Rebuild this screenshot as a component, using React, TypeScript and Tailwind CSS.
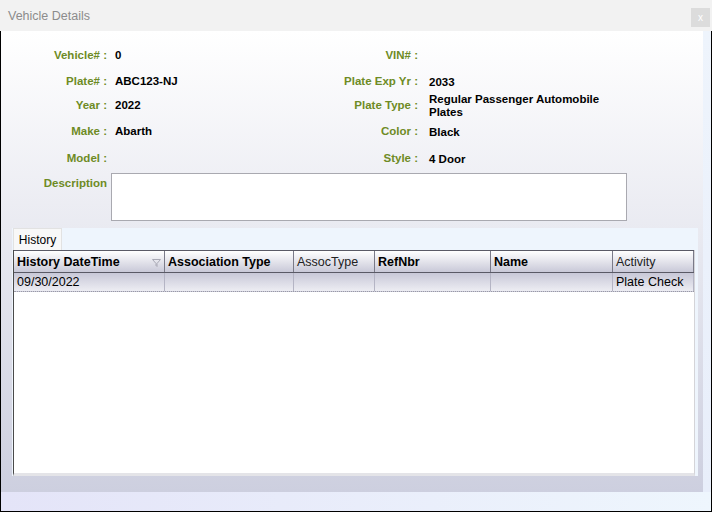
import React from "react";

type Field = { label: string; value: string };

const leftFields: Field[] = [
  { label: "Vehicle# :", value: "0" },
  { label: "Plate# :", value: "ABC123-NJ" },
  { label: "Year :", value: "2022" },
  { label: "Make :", value: "Abarth" },
  { label: "Model :", value: "" },
];

const rightFields: Field[] = [
  { label: "VIN# :", value: "" },
  { label: "Plate Exp Yr :", value: "2033" },
  { label: "Plate Type :", value: "Regular Passenger Automobile Plates" },
  { label: "Color :", value: "Black" },
  { label: "Style :", value: "4 Door" },
];

const rowHeights = ["h-[26px]", "h-[26px]", "h-[22px]", "h-[30px]", "h-[24px]"];

const columns = [
  { title: "History DateTime", w: "w-[151px]", bold: true, filter: true },
  { title: "Association Type", w: "w-[129px]", bold: true },
  { title: "AssocType", w: "w-[81px]", bold: false },
  { title: "RefNbr", w: "w-[116px]", bold: true },
  { title: "Name", w: "w-[122px]", bold: true },
  { title: "Activity", w: "flex-1", bold: false },
];

const rowData = ["09/30/2022", "", "", "", "", "Plate Check"];

const FilterIcon = () => (
  <svg width="9" height="8" viewBox="0 0 9 8" className="shrink-0">
    <path d="M0.5 0.5 H8.5 L5 4.5 V7.5 L4 6.5 V4.5 Z" fill="none" stroke="#a8a8b4" strokeWidth="1" />
  </svg>
);

export default function App() {
  return (
    <div
      className="w-[712px] h-[512px] flex flex-col bg-[#f2f2f2] overflow-hidden"
      style={{ fontFamily: '"Liberation Sans", Arial, sans-serif' }}
    >
      {/* title bar */}
      <div className="h-[31px] shrink-0 flex items-start justify-between pl-[8px] pr-[2px]">
        <span className="mt-[7px] text-[12.5px] text-[#8c8c8c]">Vehicle Details</span>
        <div className="mt-[8px] w-[19px] h-[19px] bg-[#dcdcdc] flex items-center justify-center text-[10px] text-white leading-none">
          x
        </div>
      </div>

      {/* body */}
      <div className="flex-1 flex flex-col border-l border-r border-b border-black">
        <div className="flex-1 flex">
          <div className="flex-1 bg-gradient-to-b from-white to-[#cdcfdf] flex flex-col">
            {/* fields */}
            <div className="pt-[12px] flex text-[11.5px] font-bold">
              <div className="w-[317px] flex flex-col">
                {leftFields.map((f, i) => (
                  <div key={f.label} className={`${rowHeights[i]} flex items-center`}>
                    <div className="w-[106px] text-right text-[#6e8b25]">{f.label}</div>
                    <div className="pl-[8px] text-black">{f.value}</div>
                  </div>
                ))}
              </div>
              <div className="flex flex-col">
                {rightFields.map((f, i) => (
                  <div key={f.label} className={`${rowHeights[i]} flex items-center`}>
                    <div className="w-[100px] text-right text-[#6e8b25]">{f.label}</div>
                    <div className="pl-[11px] w-[196px] text-black leading-[13px]">{f.value}</div>
                  </div>
                ))}
              </div>
            </div>

            {/* description */}
            <div className="mt-[2px] flex items-start">
              <div className="w-[106px] pt-[2px] text-right text-[11.5px] font-bold text-[#6e8b25]">
                Description
              </div>
              <div className="ml-[4px] w-[516px] h-[48px] bg-white border border-[#a9a9b0]" />
            </div>

            {/* tabs + grid */}
            <div className="mt-[7px] ml-[11px] w-[686px] h-[248px] bg-[#eef5fd] flex flex-col">
              <div className="h-[22px] flex items-end pl-[1px]">
                <div className="h-[22px] w-[49px] bg-[#f8f8f8] border-l border-t border-r border-[#e2e2e2] flex items-center justify-center text-[12px] text-black">
                  History
                </div>
              </div>
              <div className="ml-[1px] w-[682px] flex-1 bg-white border-l border-[#4a4a4a] border-r border-r-[#d4d4d8] border-b-[3px] border-b-[#e4e4e8] flex flex-col">
                {/* header */}
                <div className="h-[23px] flex border-t border-b border-[#5a5a66] bg-gradient-to-b from-white to-[#c9c9d8] text-[12.5px]">
                  {columns.map((c) => (
                    <div
                      key={c.title}
                      className={`${c.w} flex items-center justify-between px-[3px] pt-[2px] border-r border-[#7a7a88] ${
                        c.bold ? "font-bold text-black" : "text-[#222]"
                      }`}
                    >
                      <span>{c.title}</span>
                      {c.filter && <FilterIcon />}
                    </div>
                  ))}
                </div>
                {/* row */}
                <div className="h-[19px] flex border-b border-dotted border-[#9a9aa6] bg-gradient-to-b from-[#c8c8d8] to-[#ededf3] text-[12.5px] text-black">
                  {columns.map((c, i) => (
                    <div key={c.title} className={`${c.w} flex items-center px-[3px] border-r border-[#b4b4c4]`}>
                      {rowData[i]}
                    </div>
                  ))}
                </div>
                <div className="flex-1" />
              </div>
            </div>
          </div>
          <div className="w-[8px] bg-gradient-to-b from-[#eef4fc] to-[#e8eefa]" />
        </div>
        <div className="h-[19px] bg-gradient-to-r from-[#e4e4f8] to-[#eef6fd]" />
      </div>
    </div>
  );
}
